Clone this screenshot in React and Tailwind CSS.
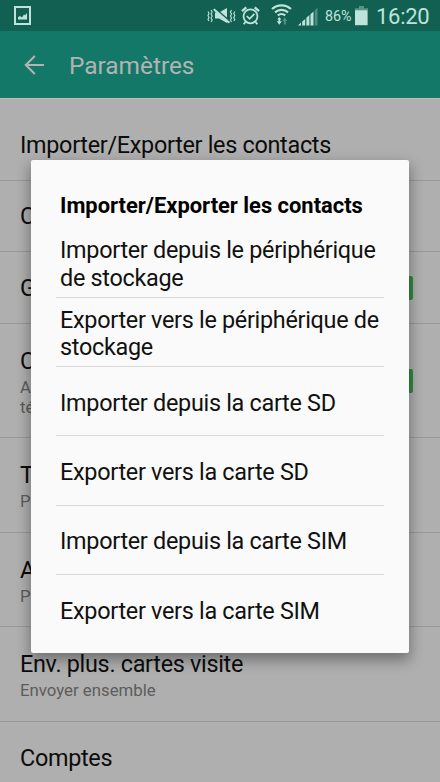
import React from 'react';

const settings = [
  { title: 'Importer/Exporter les contacts', height: 'h-[82px] pt-[11px]' },
  { title: 'C', height: 'h-[71px]' },
  { title: 'G', height: 'h-[72px]', toggle: true },
  { title: 'C', lines: ['A', 'té'], height: 'h-[114px]', toggle: true },
  { title: 'T', lines: ['P'], height: 'h-[95px]' },
  { title: 'A', lines: ['P'], height: 'h-[94px]' },
  { title: 'Env. plus. cartes visite', lines: ['Envoyer ensemble'], height: 'h-[95px]' },
  { title: 'Comptes', height: 'h-[72px]' },
];

const options = [
  ['Importer depuis le périphérique', 'de stockage'],
  ['Exporter vers le périphérique de', 'stockage'],
  ['Importer depuis la carte SD'],
  ['Exporter vers la carte SD'],
  ['Importer depuis la carte SIM'],
  ['Exporter vers la carte SIM'],
];

function PictureIcon() {
  return (
    <svg width="17" height="19" viewBox="0 0 17 19" className="mt-[6px]">
      <rect x="1" y="1" width="15" height="17" fill="none" stroke="currentColor" strokeWidth="2" />
      <path d="M4 13.5v-2.2l2-1.3 2 1.5 2-3 1 .8 2-2.3v6.5z" fill="currentColor" />
    </svg>
  );
}

function MuteVibrateIcon() {
  return (
    <svg width="29" height="18" viewBox="0 0 29 18">
      <g fill="none" stroke="currentColor" strokeWidth="1.1">
        <path d="M1 4.5l1 2-1 2 1 2-1 2 1 1.5M4 3l1.2 2L4 7l1.2 2L4 11l1.2 2L4 15" />
        <path d="M24.6 3l-1.2 2 1.2 2-1.2 2 1.2 2-1.2 2 1.2 2M27.8 4.5l-1 2 1 2-1 2 1 2-1 1.5" />
      </g>
      <path d="M8 5.5h4L20 1v15l-8-4.5H8z" fill="currentColor" />
      <path d="M8.2 1.6l14.5 12.6" stroke="#116052" strokeWidth="1.8" />
      <path d="M6.8 2.2l15.6 13.6" stroke="currentColor" strokeWidth="2" />
    </svg>
  );
}

function AlarmIcon() {
  return (
    <svg width="19" height="20" viewBox="0 0 19 20" fill="none" stroke="currentColor">
      <circle cx="9.5" cy="10.3" r="7" strokeWidth="1.8" />
      <path d="M5.8 10l2.8 2.8 4.8-5" strokeWidth="1.7" />
      <path d="M1 5.2L5.3 1.4M18 5.2l-4.3-3.8" strokeWidth="2.3" />
      <path d="M4.4 16l-1.7 2.3M14.6 16l1.7 2.3" strokeWidth="1.8" />
    </svg>
  );
}

function WifiIcon() {
  return (
    <svg width="21" height="22" viewBox="0 0 21 22" fill="none" stroke="currentColor">
      <path d="M1 5a14 14 0 0 1 19 0" strokeWidth="2.2" />
      <path d="M4 8.4a9.6 9.6 0 0 1 13 0" strokeWidth="2.2" />
      <path d="M6.8 11.4a5.6 5.6 0 0 1 7.4 0" strokeWidth="2.2" />
      <path d="M8.3 14v5" strokeWidth="1.8" />
      <path d="M5.8 17.3h5l-2.5 3.4zM6.3 15.6h4l-2-2.6z" fill="currentColor" stroke="none" />
      <g opacity="0.4">
        <path d="M13.8 20.5v-5" strokeWidth="1.8" />
        <path d="M11.4 17h4.8l-2.4-3.6z" fill="currentColor" stroke="none" />
      </g>
    </svg>
  );
}

function SignalIcon() {
  return (
    <svg width="20" height="19" viewBox="0 0 20 19" fill="currentColor">
      <path d="M0 18.5l3-3v3zM4.2 14.5l3-2.6v6.6h-3zM8.4 10.8l3-2.7v10.4h-3zM12.5 7.2l3-2.7v14h-3z" />
      <path d="M16.7 3.5l2.8-2.7v17.7h-2.8z" opacity="0.35" />
    </svg>
  );
}

function BatteryIcon() {
  return (
    <svg width="13" height="20" viewBox="0 0 13 20" fill="currentColor">
      <path d="M4 0h5v2.2h4v2H0v-2h4z" opacity="0.4" />
      <rect y="4.2" width="12.6" height="15" />
    </svg>
  );
}

function StatusBar() {
  return (
    <div className="flex h-[31px] shrink-0 items-start bg-[#116052] pl-[14px] text-[#bfe3da]">
      <PictureIcon />
      <div className="mt-[7px] ml-[176px]">
        <MuteVibrateIcon />
      </div>
      <div className="mt-[6px] ml-[5px]">
        <AlarmIcon />
      </div>
      <div className="mt-[4px] ml-[11px]">
        <WifiIcon />
      </div>
      <div className="mt-[7px] ml-[6px]">
        <SignalIcon />
      </div>
      <span className="mt-[7px] ml-[7px] w-[28px] text-[14.3px] leading-[19px] whitespace-nowrap">86%</span>
      <div className="mt-[6px] ml-[2px]">
        <BatteryIcon />
      </div>
      <span className="mt-[5px] ml-[8px] text-[22px] leading-[24px] tracking-[-0.3px]">16:20</span>
    </div>
  );
}

function Header() {
  return (
    <div className="flex h-[68px] shrink-0 items-center border-b border-[#bcbcbc] bg-[#147868] pl-[24px] text-[#b3b3b3]">
      <svg width="21" height="20" viewBox="0 0 21 20" fill="none" stroke="currentColor" strokeWidth="2">
        <path d="M20 10H2M10.8 1L1.8 10l9 9" />
      </svg>
      <h1 className="ml-[24px] pt-[2px] text-[24.4px] leading-[28px]">Paramètres</h1>
    </div>
  );
}

function SettingRow({ title, lines = [], height, toggle }) {
  return (
    <div className={`flex shrink-0 items-center justify-between border-b border-[#989898] pr-[27px] pl-[20px] ${height}`}>
      <div>
        <p className="text-[23.4px] leading-[28px] tracking-[-0.3px] text-[#0c0c0c]">{title}</p>
        {lines.length > 0 && (
          <div className="-mb-[2px] pt-[2px]">
            {lines.map((line) => (
              <p key={line} className="text-[16.8px] leading-[20px] text-[#5c5c5c]">
                {line}
              </p>
            ))}
          </div>
        )}
      </div>
      {toggle && <span className="h-[24px] w-[44px] rounded-[2px] bg-[#348a40]" />}
    </div>
  );
}

function ContactsDialog() {
  return (
    <div className="absolute top-[160px] left-[31px] h-[493px] w-[378px] rounded-[2px] bg-[#fafafa] pt-[32px] pr-[25px] pl-[25px] shadow-[0_6px_14px_1px_rgba(0,0,0,0.36)]">
      <h2 className="h-[36.6px] pl-[4px] text-[21.9px] leading-[28px] font-bold whitespace-nowrap text-black">
        Importer/Exporter les contacts
      </h2>
      <ul className="divide-y divide-[#d9d9d9]">
        {options.map((lines) => (
          <li key={lines.join(' ')} className="flex h-[69.25px] flex-col justify-center pt-[4px] pl-[4px]">
            {lines.map((line) => (
              <span key={line} className="text-[23.4px] leading-[27.4px] tracking-[-0.29px] whitespace-nowrap text-[#111]">
                {line}
              </span>
            ))}
          </li>
        ))}
      </ul>
    </div>
  );
}

export default function App() {
  return (
    <div className="relative flex h-[782px] w-[440px] flex-col overflow-hidden bg-[#afafaf] font-[Roboto,sans-serif]">
      <StatusBar />
      <Header />
      {settings.map((row, i) => (
        <SettingRow key={i} {...row} />
      ))}
      <ContactsDialog />
    </div>
  );
}
